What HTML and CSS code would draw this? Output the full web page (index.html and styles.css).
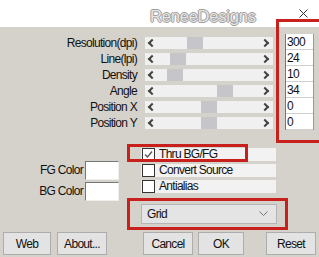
FILE: index.html
```html
<!DOCTYPE html>
<html lang="en">
<head>
  <meta charset="UTF-8" />
  <title>Halftone</title>
  <link rel="stylesheet" href="styles.css">
</head>
<body>
<div class="dialog">

  <!-- titel + watermerk -->
  <header class="titlebar">
    <span class="brand">ReneeDesigns</span>
    <svg class="close" width="9" height="9" viewBox="0 0 9 9"><path d="M0.5 0.5 L8.5 8.5 M8.5 0.5 L0.5 8.5" stroke="#333" stroke-width="1" fill="none"/></svg>
  </header>

  <section class="params">
    <div class="labels">
      <div class="row">Resolution(dpi)</div>
      <div class="row">Line(lpi)</div>
      <div class="row">Density</div>
      <div class="row">Angle</div>
      <div class="row">Position X</div>
      <div class="row">Position Y</div>
    </div>

    <div class="sliders">
      <div class="row"><div class="slider"><span class="arrow left"></span><span class="thumb" style="margin-left:30px"></span><span class="arrow right"></span></div></div>
      <div class="row"><div class="slider"><span class="arrow left"></span><span class="thumb" style="margin-left:13px"></span><span class="arrow right"></span></div></div>
      <div class="row"><div class="slider"><span class="arrow left"></span><span class="thumb" style="margin-left:10px"></span><span class="arrow right"></span></div></div>
      <div class="row"><div class="slider"><span class="arrow left"></span><span class="thumb" style="margin-left:60px"></span><span class="arrow right"></span></div></div>
      <div class="row"><div class="slider"><span class="arrow left"></span><span class="thumb" style="margin-left:44px"></span><span class="arrow right"></span></div></div>
      <div class="row"><div class="slider"><span class="arrow left"></span><span class="thumb" style="margin-left:44px"></span><span class="arrow right"></span></div></div>
    </div>

    <div class="values">
      <div class="group">
        <div class="num">300</div>
        <div class="num">24</div>
        <div class="num">10</div>
        <div class="num">34</div>
      </div>
      <div class="group">
        <div class="num">0</div>
        <div class="num">0</div>
      </div>
    </div>
  </section>

  <section class="options">
    <div class="colors">
      <div class="color-row"><span class="color-label">FG Color</span><span class="swatch"></span></div>
      <div class="color-row"><span class="color-label">BG Color</span><span class="swatch"></span></div>
    </div>
    <div class="checks">
      <label class="check"><span class="box checked"><svg width="11" height="11" viewBox="0 0 11 11"><path d="M2 5.5 L4.5 8 L9 2.5" stroke="#555" stroke-width="1.3" fill="none"/></svg></span>Thru BG/FG</label>
      <label class="check"><span class="box"></span>Convert Source</label>
      <label class="check"><span class="box"></span>Antialias</label>
    </div>
  </section>

  <div class="select-wrap">
    <div class="select">
      <span>Grid</span>
      <svg width="9" height="6" viewBox="0 0 9 6"><path d="M0.5 0.5 L4.5 4.5 L8.5 0.5" stroke="#777" stroke-width="1" fill="none"/></svg>
    </div>
  </div>

  <footer class="buttons">
    <button class="btn web">Web</button>
    <button class="btn about">About...</button>
    <button class="btn cancel">Cancel</button>
    <button class="btn ok">OK</button>
    <button class="btn reset">Reset</button>
  </footer>

  <!-- rode markeringen -->
  <div class="mark mark-values"></div>
  <div class="mark mark-thru"></div>
  <div class="mark mark-grid"></div>
</div>
</body>
</html>
```

FILE: styles.css
```css
body {
  margin: 0;
  background: #d5d2cc;
  font-family: 'Liberation Sans', Arial, sans-serif;
  font-size: 12px;
  letter-spacing: -0.7px;
  color: #111;
  overflow: hidden;
}

.dialog {
  position: relative;
  width: 319px;
  height: 257px;
  overflow: hidden;
}

.titlebar {
  height: 27px;
  background: #fff;
  display: flex;
  align-items: flex-start;
}

.brand {
  margin: 7px 0 0 150px;
  font-size: 16.5px;
  letter-spacing: -0.2px;
  color: #e4e4e4;
  text-shadow: -1px 0 #a0a0a0, 1px 0 #a0a0a0, 0 -1px #a0a0a0, 0 1px #a0a0a0;
}

.close {
  margin: 9px 11px 0 auto;
}

/* sliders */
.params {
  display: flex;
  padding-top: 7px;
}

.row {
  height: 16px;
  box-sizing: border-box;
}

.labels {
  width: 137px;
  margin-right: 8px;
  text-align: right;
}

.labels .row {
  line-height: 18px;
}

.sliders {
  width: 128px;
}

.sliders .row {
  padding-top: 3px;
}

.slider {
  height: 12px;
  background: #f0f0f0;
  display: flex;
  align-items: center;
}

.arrow {
  width: 12px;
  height: 12px;
  position: relative;
}

.arrow::before {
  content: "";
  position: absolute;
  top: 3px;
  width: 4px;
  height: 4px;
  border-left: 2px solid #444;
  border-bottom: 2px solid #444;
}

.arrow.left::before {
  left: 4px;
  transform: rotate(45deg);
}

.arrow.right {
  margin-left: auto;
}

.arrow.right::before {
  left: 1px;
  transform: rotate(-135deg);
}

.thumb {
  width: 16px;
  height: 12px;
  background: #c5c5ca;
}

.values {
  width: 29px;
  margin-left: 12px;
}

.group {
  background: #fff;
  border-left: 1px solid #777;
  border-right: 1px solid #999;
}

.num {
  height: 16px;
  box-sizing: border-box;
  padding-left: 1px;
  line-height: 17px;
  border-bottom: 1px solid #d0d0d0;
}

/* kleuren en vinkjes */
.options {
  display: flex;
  padding-top: 18px;
}

.colors {
  width: 141px;
  padding-top: 13px;
}

.color-row {
  display: flex;
  align-items: center;
  height: 18px;
}

.color-row + .color-row {
  margin-top: 3px;
}

.color-label {
  width: 83px;
  text-align: right;
  margin-right: 2px;
}

.swatch {
  width: 32px;
  height: 17px;
  background: #fff;
  border-top: 1px solid #777;
  border-left: 1px solid #777;
  border-right: 1px solid #eee;
  border-bottom: 1px solid #eee;
}

.checks {
  width: 135px;
}

.check {
  display: flex;
  align-items: center;
  height: 13px;
  margin-bottom: 3px;
  background: #f2f2f2;
  line-height: 13px;
}

.box {
  width: 11px;
  height: 11px;
  margin: 0 4px 0 1px;
  background: #fff;
  border: 1px solid #333;
  display: flex;
}

/* dropdown */
.select-wrap {
  padding: 4px 0 0 141px;
}

.select {
  width: 136px;
  height: 20px;
  box-sizing: border-box;
  background: #e4e4e4;
  border: 1px solid #b5b5b5;
  display: flex;
  align-items: center;
  justify-content: space-between;
  padding: 0 8px 0 5px;
}

/* knoppen */
.buttons {
  display: flex;
  margin-top: 8px;
}

.btn {
  height: 23px;
  padding: 0;
  font: inherit;
  letter-spacing: inherit;
  color: #111;
  background: #e3e3e3;
  border: 1px solid #adadad;
}

.web { margin-left: 3px; width: 48px; }
.about { margin-left: 6px; width: 50px; }
.cancel { margin-left: 36px; width: 50px; }
.ok { margin-left: 5px; width: 46px; }
.reset { margin-left: 22px; width: 50px; }

/* annotaties */
.mark {
  position: absolute;
  border: 3px solid #c8201c;
  box-sizing: border-box;
}

.mark-values {
  left: 276px;
  top: 19px;
  width: 60px;
  height: 124px;
}

.mark-thru {
  left: 127px;
  top: 144px;
  width: 121px;
  height: 18px;
}

.mark-grid {
  left: 127px;
  top: 198px;
  width: 161px;
  height: 32px;
}
```
